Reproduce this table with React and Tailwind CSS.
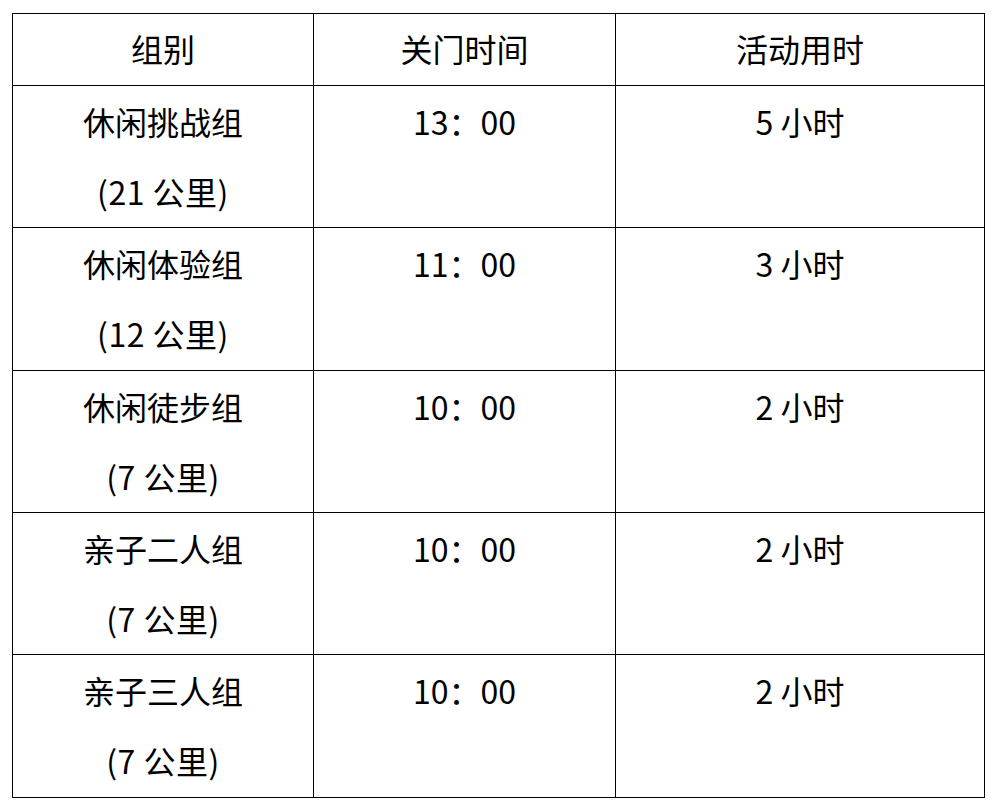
export default function App() {
  const rows = [
    ["休闲挑战组", "(21 公里)", "13：00", "5 小时", "h-[142px]"],
    ["休闲体验组", "(12 公里)", "11：00", "3 小时", "h-[143px]"],
    ["休闲徒步组", "(7 公里)", "10：00", "2 小时", "h-[142px]"],
    ["亲子二人组", "(7 公里)", "10：00", "2 小时", "h-[142px]"],
    ["亲子三人组", "(7 公里)", "10：00", "2 小时", "h-[143px]"],
  ];
  const font = { fontFamily: '"Noto Sans CJK SC", "Noto Sans", sans-serif' };
  return (
    <div className="w-[994px] h-[807px] bg-white pt-[13px] pl-[12px] text-black" style={font}>
      <div className="grid grid-cols-[301px_302px_369px] w-[973px] border-l border-t border-black text-[32px]">
        {["组别", "关门时间", "活动用时"].map((h) => (
          <div key={h} className="h-[72px] border-r border-b border-black flex items-center justify-center leading-[70px] pb-[4px]">
            {h}
          </div>
        ))}
        {rows.map(([a, b, c, d, h], i) => (
          <div key={i} className="contents">
            <div className={`${h} border-r border-b border-black text-center leading-[70px]`}>
              <div>{a}</div>
              <div className="tracking-[0.5px]">{b}</div>
            </div>
            <div className={`${h} border-r border-b border-black text-center leading-[70px]`}>{c}</div>
            <div className={`${h} border-r border-b border-black text-center leading-[70px]`}>{d}</div>
          </div>
        ))}
      </div>
    </div>
  );
}
